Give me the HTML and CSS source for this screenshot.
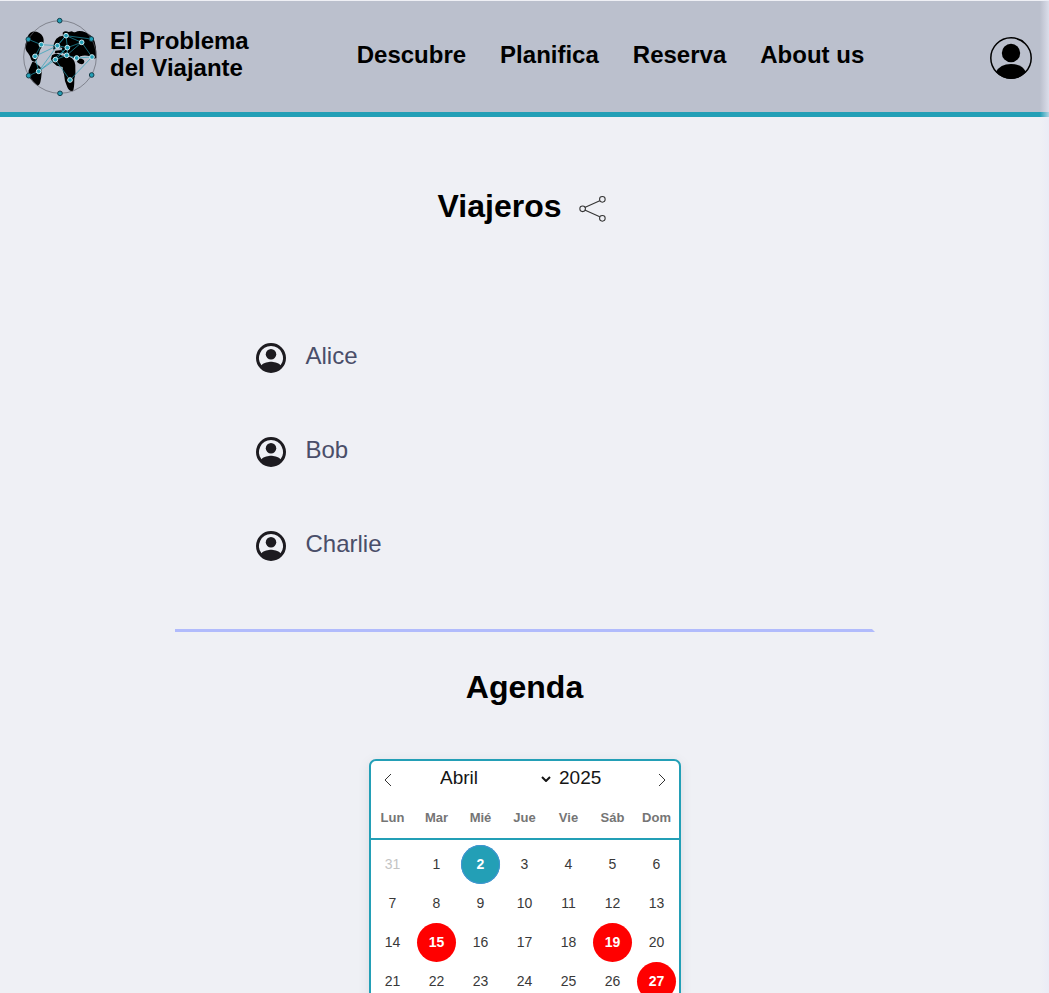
FILE: index.html
```html
<!DOCTYPE html>
<html lang="es">
<head>
<meta charset="utf-8">
<title>El Problema del Viajante</title>
<link rel="stylesheet" href="styles.css">
</head>
<body>
<header class="header">
  <a class="brand" href="#">
    <svg class="brand-logo" viewBox="36 27 228 228" aria-hidden="true">
      <path d="M50 90Q54 69 67 65Q80 64 88 69Q100 76 101 90Q102 103 97 110Q88 118 87 133Q82 150 75 155Q68 156 64 150Q62 139 54 129Q44 119 46 105Z"/>
      <path d="M67 156Q76 154 80 163Q96 170 95 189Q94 203 91 217Q88 227 82 227Q68 216 59 204Q53 194 56 181Z"/>
      <path d="M130 119Q129 100 139 86Q148 77 159 77L158 68Q165 61 176 66L186 64Q190 68 197 66Q205 61 217 64Q236 68 250 85Q260 105 259 144Q248 150 240 139Q224 134 211 139Q200 151 190 143L181 139L170 136L158 129L150 130Q143 127 140 130L134 130L136 122L155 120L157 114L144 110Z"/>
      <path d="M126 136Q134 129 145 132L158 137L170 136L186 145Q198 155 196 176Q198 192 193 206Q193 238 188 244Q177 244 172 232Q163 214 162 193Q157 183 158 171L140 167Q125 156 123 147Z"/>
      <ellipse cx="212" cy="154" rx="11" ry="8" transform="rotate(20 212 154)"/>
      <circle class="orbit" cx="150" cy="141" r="109"/>
      <path class="route" d="M55 88L94 104L142 107L168 77L215 97L246 141L180 210L136 149L170 136L200 144L246 141M94 104L75 139L142 107L86 184L75 139M86 184L172 113L142 107M86 184L136 149L172 113L168 77L244 87M170 136L215 97L172 113V136M168 77L142 107L170 136M56 197L86 184"/>
      <g class="outer-nodes"><circle cx="149" cy="32" r="7"/><circle cx="55" cy="88" r="7"/><circle cx="244" cy="87" r="7"/><circle cx="56" cy="197" r="7"/><circle cx="245" cy="195" r="7"/><circle cx="150" cy="250" r="7"/></g>
      <g class="inner-nodes"><circle cx="168" cy="77" r="7"/><circle cx="94" cy="104" r="7"/><circle cx="142" cy="107" r="7"/><circle cx="172" cy="113" r="7"/><circle cx="215" cy="97" r="7"/><circle cx="75" cy="139" r="7"/><circle cx="170" cy="136" r="7"/><circle cx="136" cy="149" r="7"/><circle cx="200" cy="144" r="7"/><circle cx="246" cy="141" r="7"/><circle cx="86" cy="184" r="7"/><circle cx="180" cy="210" r="7"/></g>
    </svg>
    <span>El Problema<br>del Viajante</span>
  </a>
  <nav class="nav">
    <a href="#">Descubre</a>
    <a href="#">Planifica</a>
    <a href="#">Reserva</a>
    <a href="#">About us</a>
  </nav>
  <button class="account" type="button" aria-label="Cuenta">
    <svg viewBox="0 0 42 42" aria-hidden="true">
      <circle cx="21" cy="21" r="20.2" fill="none" stroke="#000" stroke-width="1.5"/>
      <circle cx="21" cy="16" r="9.2"/>
      <path d="M6 35Q10 27 21 27Q32 27 36 35Q30 42 21 42Q12 42 6 35Z"/>
    </svg>
  </button>
</header>
<main class="main">
  <section class="travellers">
    <div class="title-row">
      <h1>Viajeros</h1>
      <button class="share" type="button" aria-label="Compartir">
        <svg viewBox="0 0 26 26" aria-hidden="true">
          <path d="M5.5 12L20 5.500M5.500 14.500L20 21"/>
          <circle cx="3.500" cy="13.300" r="2.700"/><circle cx="22.500" cy="4.200" r="2.700"/><circle cx="22.500" cy="22.500" r="2.700"/>
        </svg>
      </button>
    </div>
    <ul class="people">
      <li><svg viewBox="2 2 20 20" aria-hidden="true"><path d="M12 2a10 10 0 1 0 0 20 10 10 0 0 0 0-20Zm0 2a8 8 0 0 1 6.360 12.830C16.930 15.090 13.460 14.500 12 14.500s-4.930.59-6.360 2.330A8 8 0 0 1 12 4Z"/><circle cx="12" cy="9.500" r="3.500"/></svg><span>Alice</span></li>
      <li><svg viewBox="2 2 20 20" aria-hidden="true"><path d="M12 2a10 10 0 1 0 0 20 10 10 0 0 0 0-20Zm0 2a8 8 0 0 1 6.360 12.830C16.930 15.090 13.460 14.500 12 14.500s-4.930.59-6.360 2.330A8 8 0 0 1 12 4Z"/><circle cx="12" cy="9.500" r="3.500"/></svg><span>Bob</span></li>
      <li><svg viewBox="2 2 20 20" aria-hidden="true"><path d="M12 2a10 10 0 1 0 0 20 10 10 0 0 0 0-20Zm0 2a8 8 0 0 1 6.360 12.830C16.930 15.090 13.460 14.500 12 14.500s-4.930.59-6.360 2.330A8 8 0 0 1 12 4Z"/><circle cx="12" cy="9.500" r="3.500"/></svg><span>Charlie</span></li>
    </ul>
  </section>
  <section class="agenda">
    <h1>Agenda</h1>
    <div class="calendar">
      <div class="calendar-head">
        <button type="button" aria-label="Mes anterior"><svg viewBox="0 0 10 16" aria-hidden="true"><path d="M8 2L2 8L8 14"/></svg></button>
        <div class="period">
          <div class="month">
            <select aria-label="Mes"><option>Abril</option></select>
            <svg viewBox="0 0 10 8" aria-hidden="true"><path d="M1 3L5 7L9 3"/></svg>
          </div>
          <input aria-label="Año" value="2025">
        </div>
        <button type="button" aria-label="Mes siguiente"><svg viewBox="0 0 10 16" aria-hidden="true"><path d="M2 2L8 8L2 14"/></svg></button>
      </div>
      <table class="days">
        <thead><tr><th>Lun</th><th>Mar</th><th>Mié</th><th>Jue</th><th>Vie</th><th>Sáb</th><th>Dom</th></tr></thead>
        <tbody>
          <tr><td class="outside"><span>31</span></td><td><span>1</span></td><td class="today"><span>2</span></td><td><span>3</span></td><td><span>4</span></td><td><span>5</span></td><td><span>6</span></td></tr>
          <tr><td><span>7</span></td><td><span>8</span></td><td><span>9</span></td><td><span>10</span></td><td><span>11</span></td><td><span>12</span></td><td><span>13</span></td></tr>
          <tr><td><span>14</span></td><td class="event"><span>15</span></td><td><span>16</span></td><td><span>17</span></td><td><span>18</span></td><td class="event"><span>19</span></td><td><span>20</span></td></tr>
          <tr><td><span>21</span></td><td><span>22</span></td><td><span>23</span></td><td><span>24</span></td><td><span>25</span></td><td><span>26</span></td><td class="event"><span>27</span></td></tr>
        </tbody>
      </table>
    </div>
  </section>
</main>
<div class="edge-fade"></div>
</body>
</html>
```
FILE: styles.css
```css
* {
  box-sizing: border-box;
}

body {
  margin: 0;
  background: #eff0f5;
  color: #000;
  font-family: "Liberation Sans", Arial, sans-serif;
}

button {
  display: flex;
  padding: 0;
  border: 0;
  background: none;
  cursor: pointer;
}

a {
  color: inherit;
  text-decoration: none;
}

h1 {
  margin: 0;
  font-size: 32px;
  line-height: 36px;
}

.header {
  display: flex;
  align-items: center;
  padding: 18px 17px 17px 22px;
  border-top: 1px solid #eff0f5;
  border-bottom: 5px solid #239fb6;
  background: #bbc0cd;
  font-size: 24px;
  font-weight: bold;
}

.brand {
  display: flex;
  gap: 12px;
  line-height: 27px;
}

.brand-logo {
  width: 76px;
  height: 76px;
  overflow: visible;
}

.brand span {
  padding-top: 8px;
}

.orbit {
  fill: none;
  stroke: #62646c;
  stroke-width: 2;
}

.route {
  fill: none;
  stroke: #239fb6;
  stroke-width: 2;
}

.outer-nodes {
  fill: #239fb6;
  stroke: #163f4c;
  stroke-width: 3;
}

.inner-nodes {
  fill: #239fb6;
  stroke: #d5edf3;
  stroke-width: 3;
}

.nav {
  display: flex;
  gap: 34px;
  margin: 0 auto 4px 108px;
  line-height: 28px;
}

.account {
  padding-top: 2px;
}

.account svg {
  width: 42px;
  height: 42px;
}

.main {
  display: flex;
  flex-direction: column;
  align-items: center;
}

.travellers {
  width: 67%;
  max-width: 700px;
  padding: 71px 0 67px;
  border-bottom: 3px solid #b1bbfc;
  border-right: 3px solid transparent;
}

.title-row {
  display: flex;
  justify-content: center;
  gap: 18px;
  padding-right: 2px;
}

.share {
  align-self: flex-end;
  padding-bottom: 2px;
}

.share svg {
  width: 27px;
  height: 27px;
  fill: none;
  stroke: #333;
}

.people {
  display: grid;
  gap: 58px;
  margin: 0;
  padding: 114px 81px 0;
  list-style: none;
}

.people li {
  display: flex;
  align-items: center;
  gap: 20px;
  color: #4a4e69;
  font-size: 24px;
  line-height: 36px;
}

.people svg {
  width: 30px;
  height: 34px;
  padding-top: 4px;
  fill: #1d1b20;
}

.agenda {
  display: flex;
  flex-direction: column;
  align-items: center;
  gap: 54px;
  padding-top: 37px;
}

.calendar {
  border: 2px solid #239fb6;
  border-radius: 7px;
  background: #fff;
  box-shadow: 0 3px 13px rgba(0, 0, 0, 0.08);
}

.calendar-head {
  display: flex;
  align-items: center;
  justify-content: space-between;
  height: 38px;
  padding: 0 12px;
}

.calendar-head svg {
  width: 10px;
  height: 16px;
  fill: none;
  stroke: #333;
}

.period {
  display: flex;
  gap: 8px;
  padding: 0 0 4px 6px;
}

.month {
  display: flex;
  align-items: center;
}

.month select,
.period input {
  padding: 0;
  border: 0;
  background: none;
  color: #151515;
  font-family: inherit;
  font-size: 19px;
  line-height: 24px;
}

.month select {
  width: 101px;
  appearance: none;
}

.period .month svg {
  width: 10px;
  height: 8px;
  stroke: #151515;
  stroke-width: 2;
}

.period input {
  width: 56px;
}

.days {
  border-collapse: collapse;
  table-layout: fixed;
  width: 308px;
  color: #393939;
  font-size: 14px;
  text-align: center;
}

.days th {
  height: 40px;
  padding: 0 0 2px;
  border-bottom: 2px solid #239fb6;
  color: #757575;
  font-size: 13px;
}

.days td {
  padding: 0;
}

.days tr:first-child td {
  padding-top: 5px;
}

.days span {
  display: block;
  width: 39px;
  margin: 0 auto;
  border-radius: 50%;
  line-height: 39px;
}

.outside {
  color: #c4c4c4;
}

.today span,
.event span {
  color: #fff;
  font-weight: bold;
}

.today span {
  background: #239fb6;
  box-shadow: inset 0 0 0 1px #4294d2;
}

.event span {
  background: #f00;
}

.edge-fade {
  position: absolute;
  top: 0;
  right: 0;
  width: 9px;
  height: 100%;
  background: linear-gradient(to right, rgba(232, 234, 246, 0), rgba(232, 234, 246, 0.7));
  pointer-events: none;
}
```
